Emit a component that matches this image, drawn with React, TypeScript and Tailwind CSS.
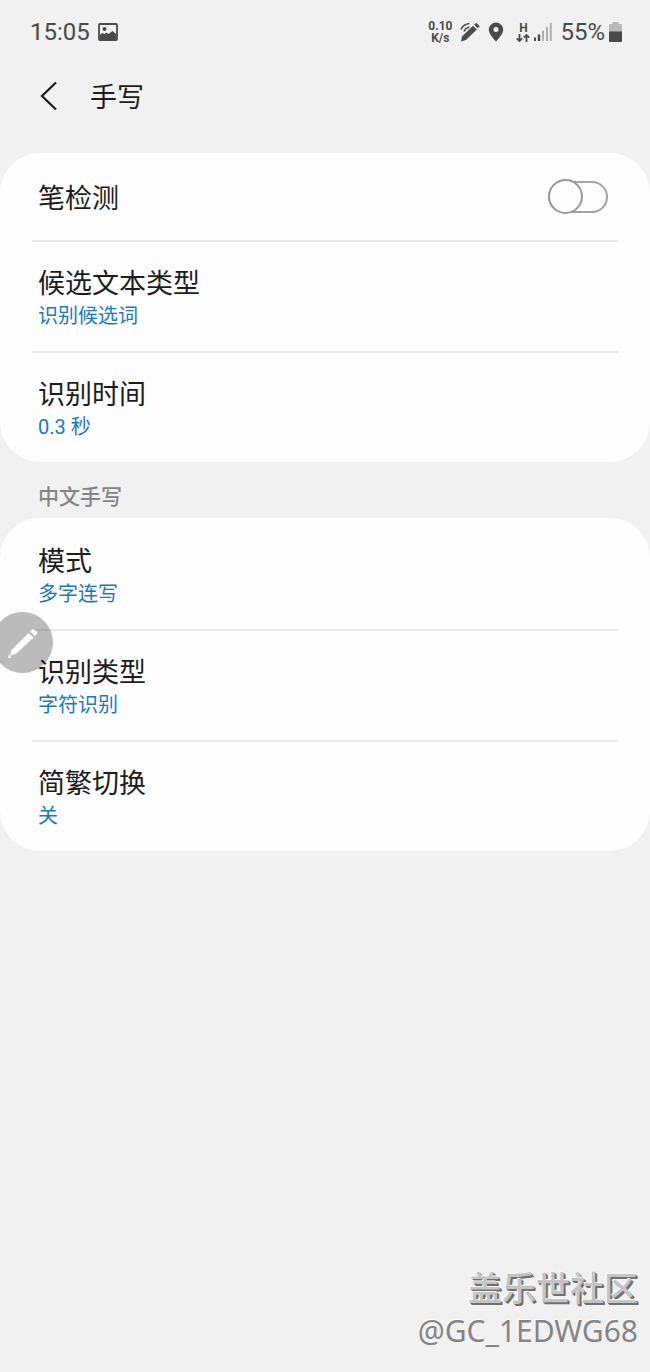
import React, { useState } from 'react';

const titleText = "font-['Noto_Sans_CJK_SC',sans-serif] text-[27px] text-[#1c1c1c]";

function StatusBar() {
  return (
    <div className="flex h-16 items-center justify-between pl-[30px] pr-7 text-[#4a4a4a]">
      <div className="flex items-center gap-2">
        <span className="text-2xl">15:05</span>
        <svg className="h-[18px] w-5" viewBox="0 0 20 18" aria-hidden="true">
          <rect x="1" y="1" width="18" height="16" rx="1" fill="none" stroke="currentColor" strokeWidth="1.8" />
          <circle cx="6.5" cy="6" r="2" fill="currentColor" />
          <path d="M2 12l2-2 2.500 1 2-1.500L10.500 11l4-3L18 11v6H2z" fill="currentColor" />
        </svg>
      </div>
      <div className="flex items-center">
        <div className="mr-2 text-center text-xs leading-3 font-bold">
          <div>0.10</div>
          <div>K/s</div>
        </div>
        <svg className="mr-2 h-5 w-5" viewBox="0 0 20 20" aria-hidden="true">
          <path d="M1 19.500l1-5L13 3.800l3.800 3.800L6 18z" fill="currentColor" />
          <path d="M14.200 2.800l2-2 3.500 3.500-2 2z" fill="currentColor" />
          <path d="M1 7.500C2.500 4 5.500 2 9.500 1.500M4 9.500c1-2.500 3-4 5.500-4.500" fill="none" stroke="currentColor" strokeWidth="1.7" />
        </svg>
        <svg className="mr-3 h-5 w-4" viewBox="0 0 16 20" aria-hidden="true">
          <path
            d="M8 .5a7.300 7.300 0 0 0-7.300 7.300C.7 12.500 8 19.500 8 19.500s7.300-7 7.300-11.700A7.300 7.300 0 0 0 8 .5zm0 4.500a2.500 2.500 0 1 1 0 5 2.500 2.500 0 0 1 0-5z"
            fill="currentColor"
            fillRule="evenodd"
          />
        </svg>
        <div className="mr-1 flex flex-col items-center text-xs leading-3 font-bold">
          <span>H</span>
          <svg className="h-2 w-[14px]" viewBox="0 0 14 8" aria-hidden="true">
            <path d="M3.500 0v7M.8 4.300l2.700 2.700 2.700-2.700M10.500 8V1M7.800 3.700L10.500 1l2.700 2.700" fill="none" stroke="currentColor" strokeWidth="1.8" />
          </svg>
        </div>
        <svg className="mr-2 h-[18px] w-[18px]" viewBox="0 0 18 18" aria-hidden="true">
          <path d="M0 14.500h2V18H0zM3.800 11.500h2.400V18H3.800z" fill="currentColor" />
          <path d="M8 7.500h2V18H8zM12 4h2v14h-2zM15.800 0h2v18h-2z" fill="#b0b0b0" />
        </svg>
        <span className="mr-1 text-2xl">55%</span>
        <svg className="h-5 w-[13px]" viewBox="0 0 13 20" aria-hidden="true">
          <path d="M3.500 0h6v2H12a1 1 0 0 1 1 1v7H0V3a1 1 0 0 1 1-1h2.500z" fill="#b9b9b9" />
          <path d="M0 9.500h13V19a1 1 0 0 1-1 1H1a1 1 0 0 1-1-1z" fill="currentColor" />
        </svg>
      </div>
    </div>
  );
}

function SettingRow({ title, value, divider = true }: { title: string; value: string; divider?: boolean }) {
  return (
    <button
      type="button"
      className={`block w-full border-t-2 px-[6px] pt-[22px] pb-[19px] text-left ${divider ? 'border-[#e9e9e9]' : 'border-transparent'}`}
    >
      <span className={`block leading-9 ${titleText}`}>{title}</span>
      <span className="block text-xl leading-8 text-[#1b78bb]">{value}</span>
    </button>
  );
}

export default function App() {
  const [penDetection, setPenDetection] = useState(false);

  return (
    <div className="flex min-h-screen flex-col bg-[#f1f1f1] font-[Roboto,'Noto_Sans_CJK_SC',sans-serif]">
      <StatusBar />

      {/* Title bar */}
      <header className="flex h-[89px] items-start pt-3 pl-[38px]">
        <button type="button" aria-label="返回" className="mr-[30px] flex h-10 items-center">
          <svg className="h-8 w-[22px]" viewBox="0 0 22 32" aria-hidden="true">
            <path d="M18 2.500L4 16l14 13.500" fill="none" stroke="#1c1c1c" strokeWidth="2.2" />
          </svg>
        </button>
        <h1 className={`leading-10 ${titleText}`}>手写</h1>
      </header>

      <section className="rounded-[40px] bg-[#fdfdfd] px-8">
        <label className="flex h-[87px] cursor-pointer items-center justify-between pr-[10px] pl-[6px]">
          <span className={`leading-9 ${titleText}`}>笔检测</span>
          <input
            type="checkbox"
            role="switch"
            className="peer sr-only"
            checked={penDetection}
            onChange={(e) => setPenDetection(e.target.checked)}
          />
          <span className="flex h-8 w-[60px] items-center rounded-full border-2 border-[#a3a3a3] peer-checked:justify-end">
            <span className="-mx-[2px] h-[35px] w-[35px] shrink-0 rounded-full border-2 border-[#999999] bg-[#fdfdfd]" />
          </span>
        </label>
        <SettingRow title="候选文本类型" value="识别候选词" />
        <SettingRow title="识别时间" value="0.3 秒" />
      </section>

      <h2 className="px-[38px] pt-[19px] pb-[9px] font-['Noto_Sans_CJK_SC',sans-serif] text-[21px] leading-7 font-medium text-[#858585]">
        中文手写
      </h2>

      <section className="relative rounded-[40px] bg-[#fdfdfd] px-8">
        <SettingRow title="模式" value="多字连写" divider={false} />
        <SettingRow title="识别类型" value="字符识别" />
        <SettingRow title="简繁切换" value="关" />

        {/* Floating pen shortcut */}
        <button
          type="button"
          aria-label="手写笔"
          className="absolute top-[94px] -left-2 flex h-[61px] w-[61px] items-center justify-center rounded-full bg-black/26"
        >
          <svg className="h-8 w-8" viewBox="0 0 32 32" aria-hidden="true">
            <path d="M4 23.500L21.500 6l5 4.500L9 27l-5.500 1.500zM23 4.500L25 2.500q1-.5 2 0l3 2.500q.5 1 0 2l-2 2z" fill="#ffffff" />
            <circle cx="2.500" cy="29.500" r="1.500" fill="#ffffff" />
          </svg>
        </button>
      </section>

      <footer className="mt-auto pr-3 pb-[18px] text-right">
        <p className="font-['Noto_Sans_CJK_SC',sans-serif] text-[34px] leading-[42px] font-medium text-[#c4c4c4] [text-shadow:-1px_-1px_0_#f8f8f8,1px_1px_0_#6f6f6f,2px_2px_0_#6f6f6f]">
          盖乐世社区
        </p>
        <p className="font-['Noto_Sans',sans-serif] text-[30px] leading-[46px] text-[#858585] [text-shadow:-1px_-1px_0_#fafafa]">
          @GC_1EDWG68
        </p>
      </footer>
    </div>
  );
}
